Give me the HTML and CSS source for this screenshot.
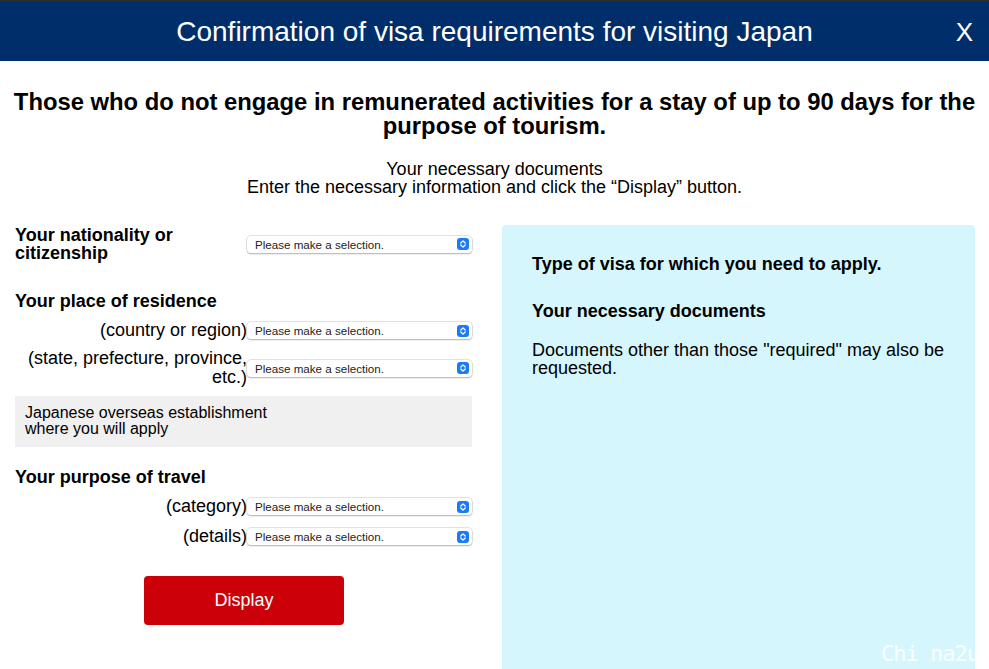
FILE: index.html
```html
<!DOCTYPE html>
<html>
  <head>
  <meta charset="UTF-8">
  <title>Confirmation of visa requirements for visiting Japan</title>
  <link rel="stylesheet" href="styles.css">
  </head>
  <body>
    <div class="header">
      <h1>Confirmation of visa requirements for visiting Japan</h1>
      <span class="close">X</span>
    </div>

    <h2 class="titre">Those who do not engage in remunerated activities for a stay of up to 90 days for the purpose of tourism.</h2>

    <p class="intro">Your necessary documents<br>Enter the necessary information and click the &ldquo;Display&rdquo; button.</p>

    <div class="contenu">
      <form action="" class="formulaire" onsubmit="return false">
        <div class="ligne ligne-nat">
          <label class="titre-champ" for="nat">Your nationality or citizenship</label>
          <div class="choix">
            <select id="nat"><option>Please make a selection.</option></select>
            <svg class="fleche" viewBox="0 0 12 12"><rect width="12" height="12" rx="3" fill="#1a7cf5"/><path d="M3.8 5 L6 2.9 L8.2 5 M3.8 7 L6 9.1 L8.2 7" stroke="#fff" stroke-width="1.3" fill="none" stroke-linecap="round" stroke-linejoin="round"/></svg>
          </div>
        </div>

        <div class="groupe">
          <div class="titre-champ">Your place of residence</div>
          <div class="ligne">
            <label class="sous-champ" for="pays">(country or region)</label>
            <div class="choix">
              <select id="pays"><option>Please make a selection.</option></select>
              <svg class="fleche" viewBox="0 0 12 12"><rect width="12" height="12" rx="3" fill="#1a7cf5"/><path d="M3.8 5 L6 2.9 L8.2 5 M3.8 7 L6 9.1 L8.2 7" stroke="#fff" stroke-width="1.3" fill="none" stroke-linecap="round" stroke-linejoin="round"/></svg>
            </div>
          </div>
          <div class="ligne">
            <label class="sous-champ" for="etat">(state, prefecture, province, etc.)</label>
            <div class="choix">
              <select id="etat"><option>Please make a selection.</option></select>
              <svg class="fleche" viewBox="0 0 12 12"><rect width="12" height="12" rx="3" fill="#1a7cf5"/><path d="M3.8 5 L6 2.9 L8.2 5 M3.8 7 L6 9.1 L8.2 7" stroke="#fff" stroke-width="1.3" fill="none" stroke-linecap="round" stroke-linejoin="round"/></svg>
            </div>
          </div>
        </div>

        <div class="etablissement">Japanese overseas establishment<br>where you will apply</div>

        <div class="groupe groupe-but">
          <div class="titre-champ">Your purpose of travel</div>
          <div class="ligne">
            <label class="sous-champ" for="cat">(category)</label>
            <div class="choix">
              <select id="cat"><option>Please make a selection.</option></select>
              <svg class="fleche" viewBox="0 0 12 12"><rect width="12" height="12" rx="3" fill="#1a7cf5"/><path d="M3.8 5 L6 2.9 L8.2 5 M3.8 7 L6 9.1 L8.2 7" stroke="#fff" stroke-width="1.3" fill="none" stroke-linecap="round" stroke-linejoin="round"/></svg>
            </div>
          </div>
          <div class="ligne">
            <label class="sous-champ" for="det">(details)</label>
            <div class="choix">
              <select id="det"><option>Please make a selection.</option></select>
              <svg class="fleche" viewBox="0 0 12 12"><rect width="12" height="12" rx="3" fill="#1a7cf5"/><path d="M3.8 5 L6 2.9 L8.2 5 M3.8 7 L6 9.1 L8.2 7" stroke="#fff" stroke-width="1.3" fill="none" stroke-linecap="round" stroke-linejoin="round"/></svg>
            </div>
          </div>
        </div>

        <div class="bouton">
          <button type="submit">Display</button>
        </div>
      </form>

      <div class="resultat">
        <p class="resultat-titre">Type of visa for which you need to apply.</p>
        <p class="resultat-titre">Your necessary documents</p>
        <p class="resultat-texte">Documents other than those "required" may also be requested.</p>
        <span class="filigrane">Chi na2u</span>
      </div>
    </div>
  </body>
</html>
```

FILE: styles.css
```css
body {
    margin: 0;
    font-family: "Liberation Sans", Arial, sans-serif;
    color: #000;
    background: #fff;
    overflow: hidden;
}

.header {
    position: relative;
    height: 59px;
    background: #002e6b;
    border-top: 2px solid #2b2b2b;
    display: flex;
    align-items: center;
    justify-content: center;
}

.header h1 {
    margin: 0;
    color: #fff;
    font-weight: normal;
    font-size: 28px;
}

.close {
    position: absolute;
    right: 16px;
    top: 15px;
    color: #fff;
    font-size: 26px;
}

.titre {
    margin: 29px 4px 0;
    font-size: 23.8px;
    line-height: 24px;
    text-align: center;
}

.intro {
    margin: 22px 0 0;
    font-size: 18px;
    line-height: 18px;
    text-align: center;
}

.contenu {
    display: flex;
    gap: 30px;
    margin-top: 29px;
    padding: 0 14px 0 15px;
}

.formulaire {
    width: 457px;
    flex-shrink: 0;
    padding-top: 1px;
}

.ligne {
    display: flex;
    align-items: center;
}

.titre-champ {
    font-weight: bold;
    font-size: 18px;
    line-height: 18px;
}

.ligne-nat .titre-champ {
    width: 232px;
}

.sous-champ {
    width: 232px;
    text-align: right;
    font-size: 18px;
    line-height: 19px;
}

.choix {
    position: relative;
    width: 225px;
    height: 17px;
}

.choix select {
    display: block;
    -webkit-appearance: none;
    appearance: none;
    width: 100%;
    height: 17px;
    margin: 0;
    padding: 0 0 0 8px;
    border: 0;
    border-radius: 4px;
    background: #fff;
    box-shadow: 0 0 0 0.5px #c8c8c8, 0 1px 1.5px rgba(0, 0, 0, 0.35);
    font-family: "Liberation Sans", Arial, sans-serif;
    font-size: 11.6px;
    color: #222;
}

.fleche {
    position: absolute;
    right: 3px;
    top: 2.5px;
    width: 12px;
    height: 12px;
    pointer-events: none;
}

.groupe {
    margin-top: 30px;
}

.groupe .titre-champ {
    margin-bottom: 11px;
}

.groupe .ligne + .ligne {
    margin-top: 9px;
}

.groupe-but .ligne + .ligne {
    margin-top: 11px;
}

.etablissement {
    margin-top: 9px;
    background: #f0f0f0;
    padding: 9px 10px 10px;
    font-size: 16px;
    line-height: 16px;
}

.groupe-but {
    margin-top: 21px;
}

.bouton {
    margin-top: 30px;
    padding-left: 129px;
}

.bouton button {
    width: 200px;
    height: 49px;
    border: 0;
    border-radius: 4px;
    background: #cc0008;
    color: #fff;
    font-family: "Liberation Sans", Arial, sans-serif;
    font-size: 18px;
}

.resultat {
    position: relative;
    flex: 1;
    height: 460px;
    background: #d6f6fe;
    border-radius: 4px;
    padding: 30px 30px 0;
    margin-top: 0;
}

.resultat-titre {
    margin: 0 0 28px;
    font-weight: bold;
    font-size: 18px;
    line-height: 19px;
}

.resultat-titre + .resultat-titre {
    margin-bottom: 20px;
}

.resultat-texte {
    margin: 0;
    font-size: 18px;
    line-height: 18px;
}

.filigrane {
    position: absolute;
    right: -4px;
    top: 416px;
    color: rgba(255, 255, 255, 0.9);
    font-family: "DejaVu Sans Mono", monospace;
    font-size: 22px;
    letter-spacing: -1px;
    white-space: pre;
}
```
